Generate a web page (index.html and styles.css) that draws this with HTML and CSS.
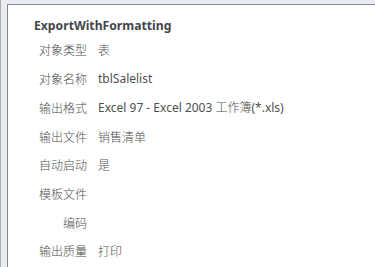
FILE: index.html
```html
<!DOCTYPE html>
<html>
<head>
<meta charset="utf-8">
<link rel="stylesheet" href="styles.css">
</head>
<body>
<div class="frame">
  <div class="panel">
    <div class="title">ExportWithFormatting</div>
    <div class="rows">
      <div class="row"><span class="label">对象类型</span><span class="value cjk">表</span></div>
      <div class="row"><span class="label">对象名称</span><span class="value">tblSalelist</span></div>
      <div class="row"><span class="label">输出格式</span><span class="value">Excel 97 - Excel 2003 <span class="cjk">工作簿</span>(*.xls)</span></div>
      <div class="row"><span class="label">输出文件</span><span class="value cjk">销售清单</span></div>
      <div class="row"><span class="label">自动启动</span><span class="value cjk">是</span></div>
      <div class="row"><span class="label">模板文件</span><span class="value"></span></div>
      <div class="row"><span class="label">编码</span><span class="value"></span></div>
      <div class="row"><span class="label">输出质量</span><span class="value cjk">打印</span></div>
    </div>
  </div>
</div>
</body>
</html>
```
FILE: styles.css
```css
html, body {
  margin: 0;
  padding: 0;
  height: 100%;
}
body {
  background: #e8ecf0;
  font-family: "Noto Sans", "Noto Sans CJK SC", sans-serif;
  overflow: hidden;
}
.frame {
  height: 100%;
  box-sizing: border-box;
  border-left: 1px solid #a9adb2;
  padding: 4px 0 0 6px;
}
.panel {
  height: 100%;
  box-sizing: border-box;
  background: #ffffff;
  border-left: 1px solid #84878b;
  border-top: 1px solid #84878b;
  padding: 12px 0 0 26px;
}
.title {
  font-size: 12.2px;
  font-weight: bold;
  color: #43464d;
  line-height: 17px;
  height: 18.5px;
}
.rows {
  display: flex;
  flex-direction: column;
}
.row {
  display: flex;
  align-items: center;
  height: 28.72px;
  font-size: 12px;
  color: #4f4f4f;
}
.label {
  width: 53px;
  text-align: right;
  flex: none;
  font-family: "Noto Sans CJK SC", sans-serif;
  font-weight: 300;
}
.value {
  margin-left: 11px;
  white-space: nowrap;
}
.cjk {
  font-family: "Noto Sans CJK SC", sans-serif;
  font-weight: 300;
}
```
